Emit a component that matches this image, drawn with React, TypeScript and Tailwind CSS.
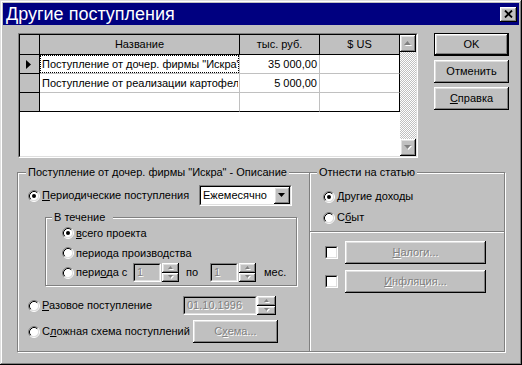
import React from "react";

const raised =
  "bg-[#c0c0c0] shadow-[inset_-1px_-1px_0_#000,inset_1px_1px_0_#fff,inset_-2px_-2px_0_#808080,inset_2px_2px_0_#dfdfdf]";
const etched = "border border-[#808080] shadow-[inset_1px_1px_0_#fff,1px_1px_0_#fff]";
const dim = "text-[#808080] [text-shadow:1px_1px_0_#fff]";

function Radio({ checked = false }: { checked?: boolean }) {
  return (
    <svg width="12" height="12" viewBox="0 0 12 12" className="shrink-0">
      <circle cx="6" cy="6" r="4.5" fill="#fff" />
      <path d="M2.11 9.89A5.5 5.5 0 0 1 9.89 2.11" fill="none" stroke="#808080" />
      <path d="M9.89 2.11A5.5 5.5 0 0 1 2.11 9.89" fill="none" stroke="#fff" />
      <path d="M2.82 9.18A4.5 4.5 0 0 1 9.18 2.82" fill="none" stroke="#000" />
      <path d="M9.18 2.82A4.5 4.5 0 0 1 2.82 9.18" fill="none" stroke="#dfdfdf" />
      {checked && <circle cx="6" cy="6" r="2" fill="#000" />}
    </svg>
  );
}

function Sunken({
  className = "",
  inner = "",
  children,
}: {
  className?: string;
  inner?: string;
  children?: React.ReactNode;
}) {
  return (
    <div className={`border border-t-[#808080] border-l-[#808080] border-r-white border-b-white ${className}`}>
      <div
        className={`h-full w-full border border-t-black border-l-black border-r-[#dfdfdf] border-b-[#dfdfdf] ${inner}`}
      >
        {children}
      </div>
    </div>
  );
}

function Arrow({ dir, gray = false, w = 7 }: { dir: "up" | "down"; gray?: boolean; w?: number }) {
  const h = Math.ceil(w / 2);
  const pts = dir === "up" ? `0,${h} ${w / 2},0 ${w},${h}` : `0,0 ${w / 2},${h} ${w},0`;
  return (
    <svg width={w + 1} height={h + 1} viewBox={`0 0 ${w + 1} ${h + 1}`}>
      {gray && <polygon points={pts} fill="#fff" transform="translate(1 1)" />}
      <polygon points={pts} fill={gray ? "#808080" : "#000"} />
    </svg>
  );
}

function Spin({ w = 17, h = 19 }: { w?: number; h?: number }) {
  return (
    <div className="flex shrink-0 flex-col" style={{ width: w, height: h }}>
      <div className={`flex flex-1 items-center justify-center ${raised}`}>
        <Arrow dir="up" gray w={5} />
      </div>
      <div className={`flex flex-1 items-center justify-center ${raised}`}>
        <Arrow dir="down" gray w={5} />
      </div>
    </div>
  );
}

function Check() {
  return <Sunken className="h-[13px] w-[13px] shrink-0" inner="bg-white" />;
}

function Legend({ children, className = "" }: { children: React.ReactNode; className?: string }) {
  return (
    <span className={`absolute -top-[7px] bg-[#c0c0c0] px-[2px] leading-[13px] whitespace-nowrap ${className}`}>
      {children}
    </span>
  );
}

const rows = [
  { name: 'Поступление от дочер. фирмы "Искра"', rub: "35 000,00", current: true },
  { name: "Поступление от реализации картофеля", rub: "5 000,00" },
  { name: "", rub: "" },
];

function Grid() {
  return (
    <Sunken className="ml-[1px] h-[125px] w-[400px] shrink-0" inner="flex bg-white">
      <div className="flex w-[380px] flex-col">
        <div className="flex h-[20px] bg-[#c0c0c0]">
          <div className="w-[20px] border-r border-b border-black" />
          <div className="flex w-[200px] items-center justify-center border-r border-b border-black">Название</div>
          <div className="flex w-[80px] items-center justify-center border-r border-b border-black">тыс. руб.</div>
          <div className="flex w-[80px] items-center justify-center border-r border-b border-black">$ US</div>
        </div>
        {rows.map((r, i) => {
          const last = i === rows.length - 1;
          const rowLine = last ? "border-b-black" : "border-b-[#c0c0c0]";
          return (
            <div key={i} className="flex h-[19px]">
              <div className="flex w-[20px] items-center border-r border-b border-black bg-[#c0c0c0] pl-[6px]">
                {r.current && (
                  <svg width="5" height="9" viewBox="0 0 5 9">
                    <polygon points="0,0 5,4.5 0,9" fill="#000" />
                  </svg>
                )}
              </div>
              <div className={`w-[200px] border-r border-b border-r-[#c0c0c0] ${rowLine}`}>
                <div
                  className={`flex h-full items-center overflow-hidden pl-[1px] whitespace-nowrap ${
                    r.current ? "border border-dotted border-black" : "border border-transparent"
                  }`}
                >
                  {r.name}
                </div>
              </div>
              <div
                className={`flex w-[80px] items-center justify-end border-r border-b border-r-[#c0c0c0] pr-[2px] ${rowLine}`}
              >
                {r.rub}
              </div>
              <div className={`w-[80px] border-r border-b border-r-black ${rowLine}`} />
            </div>
          );
        })}
      </div>
      <div className="flex w-[16px] flex-col">
        <div className={`flex h-[17px] items-center justify-center ${raised}`}>
          <Arrow dir="up" gray />
        </div>
        <div className="flex-1 bg-[repeating-conic-gradient(#c0c0c0_0_25%,#fff_0_50%)] bg-[length:2px_2px]" />
        <div className={`flex h-[17px] items-center justify-center ${raised}`}>
          <Arrow dir="down" gray />
        </div>
      </div>
    </Sunken>
  );
}

function Button({
  children,
  def = false,
  disabled = false,
  className = "",
}: {
  children: React.ReactNode;
  def?: boolean;
  disabled?: boolean;
  className?: string;
}) {
  const body = (
    <div className={`flex h-full w-full items-center justify-center ${raised} ${disabled ? dim : ""}`}>{children}</div>
  );
  return def ? (
    <div className={`border border-black ${className}`}>{body}</div>
  ) : (
    <div className={className}>{body}</div>
  );
}

export default function App() {
  return (
    <div className="font-['Liberation_Sans',Arial,sans-serif] text-[11px] leading-[13px] text-black">
      <div className="h-[365px] w-[522px] bg-[#c0c0c0] p-[3px] shadow-[inset_-1px_-1px_0_#000,inset_1px_1px_0_#dfdfdf,inset_-2px_-2px_0_#808080,inset_2px_2px_0_#fff]">
        {/* title bar */}
        <div className="flex h-[22px] items-center justify-between bg-[#000080] pl-[3px]">
          <span className="text-[18px] leading-[22px] text-white">Другие поступления</span>
          <div className={`mr-[2px] flex h-[15px] w-[17px] items-center justify-center ${raised}`}>
            <svg width="9" height="8" viewBox="0 0 9 8">
              <path d="M1 0.5 L8 7.5 M8 0.5 L1 7.5" stroke="#000" strokeWidth="1.8" />
            </svg>
          </div>
        </div>

        <div className="pt-[8px] pl-[14px]">
          {/* grid + buttons */}
          <div className="flex">
            <Grid />
            <div className="ml-[16px] flex w-[75px] flex-col gap-[4px]">
              <Button def className="h-[23px]">
                OK
              </Button>
              <Button className="h-[23px]">Отменить</Button>
              <Button className="h-[23px]">
                <span>
                  <span className="underline">С</span>правка
                </span>
              </Button>
            </div>
          </div>

          {/* groups */}
          <div className="mt-[14px] flex">
            <div className={`relative h-[180px] w-[293px] shrink-0 ${etched}`}>
              <Legend className="left-[8px]">Поступление от дочер. фирмы "Искра" - Описание</Legend>

              <div className="mt-[12px] flex h-[21px] items-center pr-[17px] pl-[10px]">
                <Radio checked />
                <span className="ml-[2px] flex-1">
                  <span className="underline">П</span>ериодические поступления
                </span>
                <Sunken className="h-[21px] w-[93px]" inner="flex items-center bg-white">
                  <span className="flex-1 pl-[2px]">Ежемесячно</span>
                  <div className={`flex h-[17px] w-[16px] items-center justify-center ${raised}`}>
                    <Arrow dir="down" />
                  </div>
                </Sunken>
              </div>

              <div className={`relative mt-[11px] ml-[27px] h-[69px] w-[252px] ${etched}`}>
                <Legend className="left-[6px] pr-[8px]">В течение</Legend>
                <div className="flex flex-col pt-[5px] pl-[16px]">
                  <div className="flex h-[20px] items-center">
                    <Radio checked />
                    <span className="ml-[2px]">
                      <span className="underline">в</span>сего проекта
                    </span>
                  </div>
                  <div className="flex h-[20px] items-center">
                    <Radio />
                    <span className="ml-[2px]">периода производства</span>
                  </div>
                  <div className="flex h-[19px] items-center">
                    <Radio />
                    <span className="ml-[2px] w-[57px]">
                      пери<span className="underline">о</span>да с
                    </span>
                    <Sunken className="h-[19px] w-[28px]" inner="flex items-center pl-[2px]">
                      <span className={dim}>1</span>
                    </Sunken>
                    <div className="ml-[1px]">
                      <Spin />
                    </div>
                    <span className="ml-[7px] w-[24px]">по</span>
                    <Sunken className="h-[19px] w-[28px]" inner="flex items-center pl-[2px]">
                      <span className={dim}>1</span>
                    </Sunken>
                    <div className="ml-[1px]">
                      <Spin />
                    </div>
                    <span className="ml-[8px]">мес.</span>
                  </div>
                </div>
              </div>

              <div className="mt-[10px] flex h-[19px] items-center pl-[10px]">
                <Radio />
                <span className="ml-[2px] w-[141px]">
                  <span className="underline">Р</span>азовое поступление
                </span>
                <Sunken className="h-[19px] w-[74px]" inner="flex items-center pl-[2px]">
                  <span className={dim}>01.10.1996</span>
                </Sunken>
                <Spin w={19} />
              </div>

              <div className="mt-[5px] flex h-[23px] items-center pl-[10px]">
                <Radio />
                <span className="ml-[2px] w-[151px]">
                  С<span className="underline">л</span>ожная схема поступлений
                </span>
                <Button disabled className="h-[23px] w-[85px]">
                  <span>
                    С<span className="underline">х</span>ема...
                  </span>
                </Button>
              </div>
            </div>

            <div className={`relative -ml-[1px] h-[180px] w-[196px] shrink-0 ${etched}`}>
              <Legend className="left-[7px]">Отнести на статью</Legend>
              <div className="flex flex-col pt-[13px] pl-[13px]">
                <div className="flex h-[21px] items-center">
                  <Radio checked />
                  <span className="ml-[2px]">
                    <span className="underline">Д</span>ругие доходы
                  </span>
                </div>
                <div className="flex h-[21px] items-center">
                  <Radio />
                  <span className="ml-[2px]">
                    С<span className="underline">б</span>ыт
                  </span>
                </div>
              </div>
              <div className="mt-[3px] h-[2px] border-t border-b border-t-[#808080] border-b-white" />
              <div className="mt-[8px] flex h-[23px] items-center pl-[15px]">
                <Check />
                <Button disabled className="ml-[7px] h-[23px] w-[141px]">
                  <span>
                    <span className="underline">Н</span>алоги...
                  </span>
                </Button>
              </div>
              <div className="mt-[6px] flex h-[23px] items-center pl-[15px]">
                <Check />
                <Button disabled className="ml-[7px] h-[23px] w-[141px]">
                  <span>
                    <span className="underline">И</span>нфляция...
                  </span>
                </Button>
              </div>
            </div>
          </div>
        </div>
      </div>
    </div>
  );
}
